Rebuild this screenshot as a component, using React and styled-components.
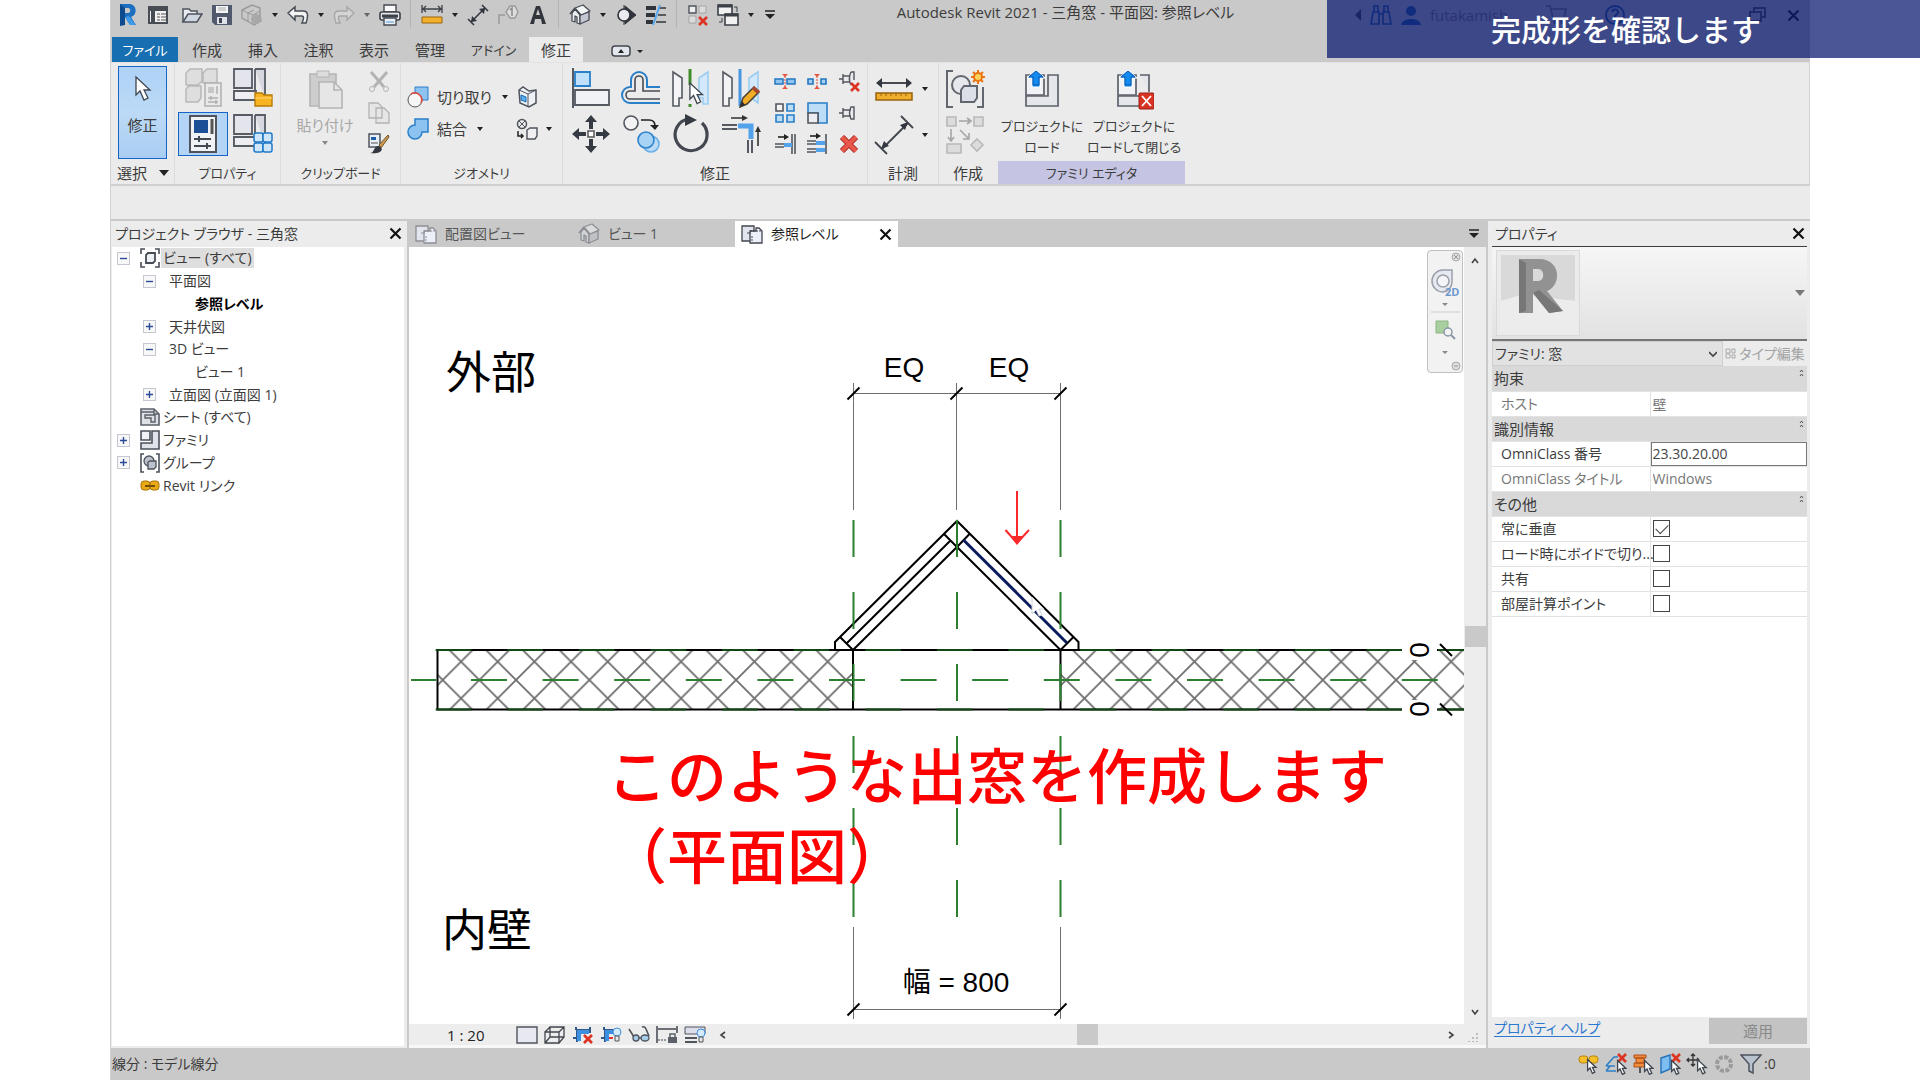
import React, { useState } from 'react'
import styled, { createGlobalStyle } from 'styled-components'

const GlobalStyle = createGlobalStyle`
    * {
        box-sizing: border-box;
    }
    body {
        margin: 0;
        background: #fff;
        color: #3c3c3c;
        font-family: 'Open Sans', 'Noto Sans CJK JP', sans-serif;
        font-size: 14px;
        line-height: 20px;
        font-feature-settings: 'palt';
        overflow: hidden;
    }
    button, input, select {
        font: inherit;
        font-feature-settings: inherit;
        color: inherit;
    }
    svg {
        display: block;
        flex: none;
    }
`

const Page = styled.div`
    height: 100vh;
    padding: 0 110px;
`

const Window = styled.div`
    height: 100%;
    display: grid;
    grid-template-rows: 37px 25px 124px 35px 1fr 32px;
    background: #c9c9c9;
    border-left: 1px solid #d0d0d0;
`

const Plain = styled.button`
    display: flex;
    align-items: center;
    justify-content: center;
    padding: 0;
    border: none;
    background: transparent;
`

/* title bar */

const TitleBar = styled.header`
    display: flex;
    height: 30px;
    padding-left: 2px;
`

const Tool = styled(Plain)`
    width: ${p => p.$w || 30}px;
    height: 30px;
`

const Gap = styled.span`
    width: 4px;
`

const Separator = styled.span`
    width: 1px;
    height: 28px;
    margin: 0 6px 0 5px;
    background: #b4b4b4;
`

const Title = styled.h1`
    flex: 1;
    margin: 0;
    font-size: 15px;
    font-weight: 400;
    line-height: 24px;
    text-align: center;
`

const UserArea = styled.div`
    display: flex;
    align-items: center;
    width: 460px;
    padding: 0 10px 0 4px;
    gap: 8px;
    color: #777;
    font-size: 15px;
`

const Spacer = styled.span`
    flex: 1;
`

/* tabs */

const TabBar = styled.nav`
    display: flex;
    padding-left: 1px;
`

const Tab = styled(Plain)`
    width: ${p => p.$w}px;
    font-size: ${p => (p.$kana ? 13 : 15)}px;
    background: ${p => (p.$active ? '#ebebeb' : 'transparent')};

    &.file {
        background: #176fb1;
        color: #fff;
        margin-right: 1px;
    }
`

/* ribbon */

const Ribbon = styled.div`
    display: flex;
    background: #ebebeb;
    border-top: 1px solid #e3e3e3;
    border-bottom: 2px solid #d0d0d0;
    border-right: 1px solid #d0d0d0;
    padding-left: 1px;
`

const Group = styled.section`
    display: flex;
    flex-direction: column;
    width: ${p => p.$w}px;
    border-right: 1px solid ${p => (p.$last ? 'transparent' : '#dcdcdc')};
`

const GroupBody = styled.div`
    display: flex;
    flex: 1;
    gap: ${p => (p.$tight ? 3 : 0)}px;
    padding: 3px 3px 1px ${p => (p.$tight ? 3 : 6)}px;
`

const GroupLabel = styled.h2`
    display: flex;
    align-items: center;
    justify-content: center;
    gap: 12px;
    height: 23px;
    margin: 0;
    font-size: ${p => (p.$kana ? 13 : 15)}px;
    font-weight: 400;
    background: ${p => (p.$accent ? '#c5c4e2' : 'transparent')};
`

const ModifyButton = styled(Plain)`
    flex-direction: column;
    justify-content: flex-start;
    width: 49px;
    height: 93px;
    gap: 12px;
    padding-top: 8px;
    font-size: 15px;
    border: 1px solid #1564c8;
    background: linear-gradient(#aed2f6, #bcdaf6 50%, #a9cdf2);
`

const BigGrid = styled.div`
    display: grid;
    grid-template-columns: repeat(${p => p.$cols}, 50px);
    grid-template-rows: 46px 46px;
`

const BigButton = styled(Plain)`
    height: 44px;

    &.selected {
        border: 1px solid #1564c8;
        background: #b3d4f5;
    }
`

const SmallGrid = styled.div`
    display: grid;
    grid-template-columns: repeat(${p => p.$cols}, 32px);
    grid-template-rows: repeat(3, 31px);
`

const PasteButton = styled(Plain)`
    flex-direction: column;
    justify-content: flex-start;
    width: 76px;
    padding-top: 4px;
    color: #a8a8a8;
    font-size: 15px;
    gap: 5px;
`

const TextTools = styled.div`
    display: flex;
    flex-direction: column;
    justify-content: center;
    gap: 10px;
    width: ${p => p.$w}px;
`

const TextTool = styled(Plain)`
    justify-content: flex-start;
    gap: ${p => p.$gap || 8}px;
    font-size: 15px;
`

const LoadButton = styled(Plain)`
    flex-direction: column;
    justify-content: flex-start;
    width: ${p => p.$w}px;
    gap: 6px;
    padding-top: 4px;
    font-size: 13px;
    line-height: 21px;
    white-space: nowrap;
`

const Row = styled.div`
    display: flex;
    align-items: center;
    gap: 6px;
    height: 46px;
`

const OptionsBar = styled.div`
    background: #ebebeb;
    border-bottom: 2px solid #c9c9c9;
`

/* workspace */

const Workspace = styled.main`
    display: grid;
    grid-template-columns: 296px 1fr 322px;
    min-height: 0;
    background: #ececec;
`

const Panel = styled.aside`
    display: flex;
    flex-direction: column;
    min-width: 0;
    padding: 0 3px 2px ${p => p.$left || 1}px;
`

const PanelHead = styled.div`
    display: flex;
    align-items: center;
    justify-content: space-between;
    height: 26px;
    padding: 0 2px 0 3px;
    border-bottom: 1px solid ${p => (p.$line ? '#3c3c3c' : 'transparent')};
`

const Tree = styled.ul`
    display: grid;
    grid-auto-rows: 1fr;
    height: 250px;
    margin: 0;
    padding: 0;
    list-style: none;
`

const TreeArea = styled.div`
    flex: 1;
    background: #fff;
`

const TreeRow = styled.li`
    display: flex;
    align-items: center;
    padding-left: ${p => 5 + p.$level * 26}px;
    font-weight: ${p => (p.$bold ? 700 : 400)};
    color: ${p => (p.$bold ? '#000' : '#3c3c3c')};

    svg {
        margin-right: 1px;
    }
`

const TreeText = styled.span`
    padding: 0 2px;
    background: ${p => (p.$selected ? '#dedede' : 'transparent')};
`

const Toggle = styled(Plain)`
    width: 13px;
    height: 13px;
    margin-right: ${p => (p.$level ? 11 : 10)}px;
    border: 1px solid ${p => (p.$empty ? 'transparent' : '#c3c7cf')};
    background: ${p => (p.$empty ? 'transparent' : '#f8f8f8')};

    svg {
        margin: 0;
    }
`

const Center = styled.section`
    display: flex;
    flex-direction: column;
    min-width: 0;
    border-left: 2px solid #c9c9c9;
    border-right: 2px solid #c9c9c9;
`

const ViewTabs = styled.div`
    display: flex;
    height: 26px;
    background: #c9c9c9;
`

const ViewTab = styled(Plain)`
    justify-content: flex-start;
    width: 163px;
    padding: 0 6px;
    gap: 8px;
    color: ${p => (p.$active ? '#1e1e1e' : '#555')};
    background: ${p => (p.$active ? '#fff' : 'transparent')};

    span {
        flex: 1;
        text-align: left;
    }
`

const ViewMenu = styled(Plain)`
    width: 24px;
    margin-left: auto;
`

const ViewArea = styled.div`
    display: grid;
    grid-template-columns: 1fr 22px;
    flex: 1;
    min-height: 0;
    background: #fff;
`

const Canvas = styled.div`
    position: relative;
    min-width: 0;
    min-height: 0;
    overflow: hidden;
    background: #fff;
`

const Drawing = styled.svg`
    position: absolute;
    width: 100%;
    height: 100%;
    font-family: 'Liberation Sans', 'Noto Sans CJK JP', sans-serif;
`

const Caption = styled.p`
    position: absolute;
    left: 198px;
    top: 486px;
    margin: 0;
    color: #fe0000;
    font-family: 'Noto Sans CJK JP', sans-serif;
    font-size: 60px;
    font-weight: 500;
    line-height: 80px;
    white-space: nowrap;
    font-feature-settings: normal;
`

const NavBar = styled.div`
    position: absolute;
    top: 3px;
    right: 1px;
    width: 36px;
    height: 123px;
    background: #f2f2f2;
    border: 1px solid #c0c0c0;
    border-radius: 4px;
`

const VScroll = styled.div`
    display: flex;
    flex-direction: column;
    justify-content: space-between;
    align-items: center;
    padding: 10px 0 8px;
    background: #ededed;
`

const Thumb = styled.span`
    width: 21px;
    height: 21px;
    background: #c9c9c9;
`

const ViewBar = styled.div`
    display: flex;
    align-items: center;
    height: 24px;
    padding: 0 5px 0 38px;
    background: #ededed;
    border-bottom: 3px solid #f8f8f8;
    color: #222;
    font-size: 15px;

    button {
        width: 28px;
    }
`

const Scale = styled.span`
    width: 66px;
`

const Track = styled.div`
    display: flex;
    justify-content: center;
    flex: 1;
`

/* properties */

const TypeSelector = styled.button`
    display: flex;
    align-items: center;
    justify-content: space-between;
    height: 94px;
    padding: 0 2px 0 4px;
    border: none;
    border-bottom: 2px solid #777;
    background: linear-gradient(#f6f6f6, #e2e2e2);
`

const Preview = styled.span`
    display: block;
    padding: 4px;
    border: 1px solid #dadada;
    background: #ebebeb;
`

const FamilyRow = styled.div`
    display: flex;
    height: 25px;
`

const FamilySelect = styled.select`
    width: 231px;
    height: 25px;
    padding: 0 2px;
    border: 1px solid #cfcfcf;
    border-radius: 0;
    background: #e2e2e2;
    appearance: none;
`

const SelectWrap = styled.label`
    position: relative;

    svg {
        position: absolute;
        right: 6px;
        top: 9px;
    }
`

const EditType = styled(Plain)`
    flex: 1;
    gap: 3px;
    color: #a3a3a3;
    white-space: nowrap;
`

const TableArea = styled.div`
    flex: 1;
    background: #fff;
`

const Table = styled.table`
    width: 100%;
    border-collapse: collapse;
    table-layout: fixed;

    th, td {
        height: 25px;
        padding: 0;
        font-weight: 400;
        text-align: left;
        border-bottom: 1px solid #e2e2e2;
    }
`

const GroupCell = styled.th`
    background: #d9d9d9;

    div {
        display: flex;
        justify-content: space-between;
        padding: 0 3px 0 2px;
        font-size: 15px;
    }
`

const NameCell = styled.th`
    color: ${p => (p.$dim ? '#777' : '#3c3c3c')};
    border-right: 1px solid #e2e2e2;

    label {
        display: block;
        padding-left: 9px;
        white-space: nowrap;
    }
`

const ValueInput = styled.input`
    display: block;
    width: 100%;
    height: 24px;
    padding: 0 1px;
    color: ${p => (p.readOnly ? '#777' : '#444')};
    border: 1px solid ${p => (p.readOnly ? 'transparent' : '#777')};
    background: #fff;
`

const Check = styled.input`
    display: block;
    width: 17px;
    height: 17px;
    margin: 0 0 0 2px;
    border: 1px solid #444;
    background: #fff;
    appearance: none;

    &:checked::after {
        content: '';
        display: block;
        width: 11px;
        height: 6px;
        margin: 3px 0 0 2px;
        border-left: 1px solid #444;
        border-bottom: 1px solid #444;
        transform: rotate(-45deg);
    }
`

const PanelFoot = styled.div`
    display: flex;
    justify-content: space-between;
    height: 29px;
    padding: 1px 0 2px 2px;

    a {
        height: 19px;
        color: #2a78cf;
        text-underline-offset: 3px;
    }
    button {
        width: 98px;
        border: none;
        background: #c3c3c3;
        color: #8a8a8a;
        font-size: 15px;
    }
`

const StatusBar = styled.footer`
    display: flex;
    align-items: center;
    padding: 0 34px 0 1px;

    button {
        width: 27px;
    }
    output {
        width: 12px;
    }
`

const Banner = styled.div`
    position: absolute;
    top: 0;
    right: 0;
    width: 593px;
    height: 58px;
    padding-left: 164px;
    background: rgba(12, 27, 113, 0.74);
    color: #fff;
    font-family: 'Noto Sans CJK JP', sans-serif;
    font-size: 30px;
    font-weight: 500;
    line-height: 56px;
    font-feature-settings: normal;
`

/* icons */

const Icon = ({ s = 22, w, h, children }) => (
    <svg width={w || s} height={h || s} viewBox={`0 0 ${w || s} ${h || s}`} fill='none' aria-hidden='true'>
        {children}
    </svg>
)

const Caret = ({ color = '#222', big }) => (
    <Icon w={10} h={6}><path d={big ? 'M0 0h10L5 6z' : 'M2 1h6L5 5z'} fill={color} /></Icon>
)

const Close = () => (
    <Icon s={13}><path d='M1.500 1.500l10 10M11.500 1.500l-10 10' stroke='#111' strokeWidth='2.200' /></Icon>
)

const Chevron = ({ d, color = '#444' }) => (
    <Icon s={8}><path d={d} stroke={color} strokeWidth='1.600' /></Icon>
)

const Pointer = ({ x = 0, y = 0, k = 1 }) => (
    <path transform={`translate(${x} ${y}) scale(${k})`} d='M1 1v18l4-4 4 9 4-2-4-8h6z' fill='#fff' stroke='#3f4650' strokeWidth={1.3 / k} />
)

const RedX = ({ x, y, r = 4 }) => (
    <path d={`M${x - r} ${y - r}l${2 * r} ${2 * r}M${x + r} ${y - r}l${-2 * r} ${2 * r}`} stroke='#dc3323' strokeWidth='2.600' />
)

const House = ({ dim }) => {
    const line = dim ? '#8c8f94' : '#474c55'
    return (
        <Icon>
            <path d='M3 9l3-4 5 6v9l-3-1v-6l-2-1v6l-3-1z' fill={dim ? '#d2d3d6' : '#eceef2'} stroke={line} strokeWidth='1.300' strokeLinejoin='round' />
            <path d='M11 11l9-3v8l-9 4z' fill={dim ? '#bfc1c5' : '#c3c8d2'} stroke={line} strokeWidth='1.300' strokeLinejoin='round' />
            <path d='M6 4l8-3 7 6-9 4z' fill={dim ? '#dadbdd' : '#f3f4f6'} stroke={line} strokeWidth='1.300' strokeLinejoin='round' />
            <path d='M6 4L1 10' stroke={line} strokeWidth='1.600' />
        </Icon>
    )
}

const PlanIcon = ({ dim }) => (
    <Icon w={22} h={20}>
        <path d='M1 2h12v15H1z' fill='#e2e4ee' stroke={dim ? '#8f8f95' : '#42464f'} strokeWidth='1.300' />
        <path d='M9 7h6V4h3l3 3v12H9z' fill='#eef0f8' stroke={dim ? '#8f8f95' : '#42464f'} strokeWidth='1.300' />
        <path d='M9 10v-3h12M11 17v-5M6 9h3' stroke={dim ? '#8f8f95' : '#42464f'} strokeDasharray='2 1' />
    </Icon>
)

const Rlogo = () => (
    <Icon w={20} h={24}>
        <path fillRule='evenodd' d='M2 1h9c8 0 9 11 2 13l5 8h-6l-5-8v8H2zM7 5v5h3c3 0 3-5 0-5z' fill='#1c6fc0' />
        <path d='M2 1l5 4v17l-5 1z' fill='#0d4b8e' />
        <path d='M7 14l4-1 7 9h-6z' fill='#3d9ae8' />
    </Icon>
)

const qat = [
    <Rlogo />,
    <Icon><path d='M2 3h18v16H2z' fill='#f2f2f2' stroke='#474c55' strokeWidth='2' /><path d='M2 3h18v4H2zM4 7v12h4V7z' fill='#474c55' /><path d='M10 10h3M10 13h3M10 16h3M14 10h5M14 13h5M14 16h5' stroke='#555' /></Icon>,
    'gap',
    <Icon><path d='M2 18V5h6l2 2h6v4' fill='#e9ebf0' stroke='#4e535c' strokeWidth='1.500' /><path d='M2 18l5-8h14l-5 8z' fill='#cfd6e2' stroke='#4e535c' strokeWidth='1.500' /></Icon>,
    <Icon><path d='M1 1h20v20H4l-3-3z' fill='#505a6c' /><path d='M5 2h12v7H5z' fill='#f4f5f7' /><path d='M6 13h10v7H6z' fill='#dfe2e8' /><path d='M8 14h3v5H8z' fill='#3d4656' /><path d='M7 4h8M7 6h8' stroke='#aaa' /></Icon>,
    <Icon><path d='M1 6l6-3 4-2 8 3v7l1 6-7 4-5-3-7-4z' fill='#c9c9c9' stroke='#9a9a9a' strokeWidth='1.400' /><path d='M1 6l6 3 6-3M7 9v9M7 9l5 2 7-4M12 11v9' stroke='#9a9a9a' /><circle cx='15' cy='15' r='5' fill='#a8a8a8' /></Icon>,
    'caret',
    <Icon><path d='M1 9l7-6v4h8c6 0 5 6 3 12h-4c2-4 2-7 0-7H8v4z' fill='#f3f3f3' stroke='#474c55' strokeWidth='1.500' /></Icon>,
    'caret',
    <Icon><path d='M21 9l-7-6v4H6C0 7 1 13 3 19h4c-2-4-2-7 0-7h7v4z' fill='#d4d4d4' stroke='#a6a6a6' strokeWidth='1.400' /></Icon>,
    'caret2',
    <Icon><path d='M5 1h12v7H5z' fill='#fafafa' stroke='#454a52' strokeWidth='1.400' /><rect x='1' y='8' width='20' height='8' rx='2' fill='#e6e8ec' stroke='#3c4048' strokeWidth='1.600' /><path d='M3 12h16' stroke='#3c4048' strokeWidth='3' /><path d='M5 14h12v7H5z' fill='#e9eff5' stroke='#454a52' strokeWidth='1.400' /><path d='M7 18h8' stroke='#5a9ad8' /></Icon>,
    'sep',
    <Icon><path d='M1 5h20M1 1v8M21 1v8M5 2L2 5l3 3M17 2l3 3-3 3' stroke='#3c4048' strokeWidth='1.300' /><path d='M1 13h20v6H1z' fill='#f2b02d' stroke='#99640d' /></Icon>,
    'caret',
    <Icon><path d='M4 18L18 4M1 15l6 6M15 1l6 6' stroke='#30353d' strokeWidth='1.500' /><path d='M4 18l1-6 5 5zM18 4l-6 1 5 5z' fill='#30353d' /></Icon>,
    <Icon><path d='M2 20v-9h6' stroke='#9b9b9b' strokeWidth='1.500' /><path d='M9 8l4-6h5l3 6-3 6h-5z' fill='#ddd' stroke='#9b9b9b' strokeWidth='1.400' /><path d='M13 6l2-2v8' stroke='#8b8b8b' strokeWidth='1.500' /></Icon>,
    <Icon><path d='M3 20L9 2h4l6 18h-4l-1-5H8l-1 5zM9 11h4l-2-6z' fill='#30343b' fillRule='evenodd' /></Icon>,
    'sep',
    <House />,
    'caret',
    <Icon><path d='M9 1v20M10 2l11 9-11 9z' fill='#30343b' stroke='#30343b' /><circle cx='9' cy='11' r='6' fill='#e9ebef' stroke='#30343b' strokeWidth='1.600' /></Icon>,
    <Icon><path d='M1 4h10M1 11h9M1 18h7' stroke='#30343b' strokeWidth='4' /><path d='M14 4h7M13 11h8M11 18h10' stroke='#30343b' strokeWidth='1.500' /><path d='M15 1L8 21' stroke='#58a6ee' strokeWidth='2' /></Icon>,
    'sep',
    <Icon><path d='M2 2h7v7H2z' fill='#eee' stroke='#50555e' strokeWidth='1.400' /><path d='M12 2h7v7h-7zM2 12h7v7H2z' fill='#dcdcdc' stroke='#a5a5a5' /><RedX x={16} y={17} r={4} /></Icon>,
    <Icon><path d='M1 1h14v10H1zM8 10h13v11H8z' fill='#f1f1f1' stroke='#3b4048' strokeWidth='1.600' /><path d='M1 2h14M8 11h13' stroke='#3b4048' strokeWidth='3' /><path d='M17 3h3v5M5 14v4h-3' stroke='#3b4048' /></Icon>,
    'caret',
]

const Panes = ({ children }) => (
    <Icon s={40}>
        <path d='M1 1h18v19H1z' fill='#e3e4ec' stroke='#565b64' strokeWidth='1.800' />
        <path d='M22 1h10v29M22 1v22H1v9h19' fill='#d7d8df' stroke='#565b64' strokeWidth='1.800' />
        <path d='M1 23h22v9H1z' fill='#ededf2' stroke='#565b64' strokeWidth='1.800' />
        {children}
    </Icon>
)

const propertyTools = [
    <Icon s={40}>
        <path d='M3 5l4-4h12v12l-4 4H3zM20 5l4-4h10v14H20zM3 21l3-3h12v12l-3 4H3z' fill='#dedede' stroke='#b8b8b8' strokeWidth='1.500' />
        <path d='M22 15h16v23H22z' fill='#e9e9e9' stroke='#b0b0b0' strokeWidth='1.500' />
        <path d='M25 19h6v6h-6z' fill='#c7c7c7' /><path d='M34 18v8M25 30h10M25 34h10M28 28v4M33 32v4' stroke='#b0b0b0' strokeWidth='1.500' />
    </Icon>,
    <Panes><path d='M22 25h7l2 2h8v11H22z' fill='#f7b320' stroke='#b87b09' strokeWidth='1.400' /><path d='M22 30h17' stroke='#fbd780' /></Panes>,
    <Icon s={40}>
        <path d='M7 2h26v36H7z' fill='#f1f2f6' stroke='#4e535c' strokeWidth='2' />
        <path d='M11 6h14v13H11z' fill='#1c4f96' /><path d='M29 5v15' stroke='#555' strokeWidth='3' />
        <path d='M11 25h17M11 32h17M16 22v6M24 29v6' stroke='#444a54' strokeWidth='2' />
    </Icon>,
    <Panes>
        {[21, 30].map(x => [19, 29].map(y => (
            <rect key={`${x}${y}`} x={x} y={y} width='9' height='9' rx='2' fill='#cfe6fa' stroke='#1f78c8' strokeWidth='1.500' />
        )))}
    </Panes>,
]

const modifyTools = [
    <Icon s={40}><path d='M2 0v40' stroke='#555a62' strokeWidth='2' /><path d='M4 4h15v14H4z' fill='#bfe0fa' stroke='#2a7fc9' strokeWidth='1.800' /><path d='M4 22h34v15H4z' fill='#f1f2f5' stroke='#555a62' strokeWidth='1.800' /></Icon>,
    <Icon s={40}><path d='M39 19H26V12a8 8 0 0 0-16 0v7H9a8 8 0 0 0 0 16h30' stroke='#2a7fc9' strokeWidth='2' /><path d='M39 23H22V12a4 4 0 0 0-8 0v11H9a4 4 0 0 0 0 8h30' stroke='#474c55' strokeWidth='1.600' /></Icon>,
    <Icon s={40}><path d='M2 4l9 6v20H8v8H2z' fill='#f4f4f6' stroke='#555a62' strokeWidth='1.600' /><path d='M37 4l-9 6v20h4v6h5z' fill='#d3e9fb' stroke='#9ccdf1' strokeWidth='1.600' /><path d='M19 1v16M19 36v3' stroke='#418b2b' strokeWidth='3' /><Pointer x={18} y={14} k={0.9} /></Icon>,
    <Icon s={40}><path d='M2 4l9 6v20H8v8H2z' fill='#f4f4f6' stroke='#555a62' strokeWidth='1.600' /><path d='M37 4l-9 6v18l9 7z' fill='#d3e9fb' stroke='#9ccdf1' strokeWidth='1.600' /><path d='M19 1v37' stroke='#4797e0' strokeWidth='3' /><path d='M19 39l3-9 11-11 5 5-12 12z' fill='#f3ac25' stroke='#4a4234' strokeWidth='1.500' /><path d='M19 39l2-6 3 4z' fill='#2c2c2c' /><path d='M31 21l2-3 6 5-3 3z' fill='#a94b31' /></Icon>,
    <Icon s={40}><path d='M20 1l6 7h-4v7h-4V8h-4zM20 39l6-7h-4v-7h-4v7h-4zM1 20l7-6v4h7v4H8v4zM39 20l-7-6v4h-7v4h7v4z' fill='#363b43' /><path d='M17 17h6v6h-6z' fill='#fff' stroke='#555' strokeWidth='1.500' /></Icon>,
    <Icon s={40}><circle cx='10' cy='9' r='7' fill='#f3f3f3' stroke='#50555e' strokeWidth='1.600' /><path d='M20 6h8q6 0 6 6' stroke='#222' strokeWidth='1.600' /><path d='M29 11h9l-4 5z' fill='#222' /><circle cx='30' cy='30' r='8' fill='#bcdcf6' stroke='#6ab0e8' strokeWidth='1.600' /><circle cx='25' cy='26' r='8' fill='#a8d3f4' stroke='#2d82cb' strokeWidth='1.600' /></Icon>,
    <Icon s={40}><path d='M31 9a16 16 0 1 1-14-4' stroke='#43474f' strokeWidth='3.200' /><path d='M14 0l12 6-12 6z' fill='#363b43' /></Icon>,
    <Icon s={40}><path d='M1 11h15M1 15h15M27 26v13M31 26v13' stroke='#555a62' strokeWidth='2' /><path d='M17 12h13v13' stroke='#52a2ec' strokeWidth='5' /><path d='M10 4h15M37 32V16' stroke='#333' strokeWidth='1.600' /><path d='M21 1l6 3-6 3zM34 18l3-6 3 6z' fill='#333' /></Icon>,
]

const splitTools = [
    <Icon><path d='M1 8h8v5H1zM13 8h8v5h-8z' fill='#8fc4f0' stroke='#2276c0' strokeWidth='1.500' /><path d='M11 5v11' stroke='#d34b3c' strokeDasharray='2 1' /><path d='M8 3h6l-3 3zM8 18h6l-3-3z' fill='#e3533f' /></Icon>,
    <Icon><path d='M2 8h5v5H2zM15 8h5v5h-5z' fill='#a6d0f3' stroke='#2276c0' strokeWidth='1.600' /><path d='M11 5v11' stroke='#d34b3c' strokeDasharray='2 1' /><path d='M8 3h6l-3 3zM8 18h6l-3-3z' fill='#e3533f' /></Icon>,
    <Icon><path d='M1 8h4M5 3v10M5 5h7M5 11h7M13 1c-2 4-2 9 0 13M13 1h3v8' stroke='#51565e' strokeWidth='1.400' /><RedX x={17} y={16} /></Icon>,
    <Icon><path d='M2 2h7v7H2z' fill='#f3f3f3' stroke='#50555e' strokeWidth='1.600' /><path d='M13 2h7v7h-7zM2 13h7v7H2zM13 13h7v7h-7z' fill='#bddcf6' stroke='#2a7fc9' strokeWidth='1.600' /></Icon>,
    <Icon><path d='M2 1h19v20H12V11H2z' fill='#bddcf6' stroke='#2a7fc9' strokeWidth='1.600' /><path d='M2 11h10v10H2z' fill='#ededf1' stroke='#50555e' strokeWidth='1.600' /></Icon>,
    <Icon><path d='M1 11h4M5 6v10M5 8h8M5 14h8M13 5c-2 4-2 8 0 12h3V5z' stroke='#51565e' strokeWidth='1.400' /></Icon>,
    <Icon><path d='M1 11h9M1 14h9M18 1v20M21 1v20' stroke='#51565e' strokeWidth='1.600' /><path d='M10 12h8' stroke='#52a2ec' strokeWidth='4' /><path d='M4 4h8' stroke='#222' strokeWidth='1.600' /><path d='M10 1l5 3-5 3z' fill='#222' /></Icon>,
    <Icon><path d='M1 8h9M1 11h9M1 16h9M1 19h9M20 1v20' stroke='#51565e' strokeWidth='1.600' /><path d='M10 10h9M10 17h9' stroke='#52a2ec' strokeWidth='4' /><path d='M4 3h8' stroke='#222' strokeWidth='1.600' /><path d='M10 0l5 3-5 3z' fill='#222' /></Icon>,
    <Icon><path d='M4 4l14 14M18 4L4 18' stroke='#a6271b' strokeWidth='6' /><path d='M4 4l14 14M18 4L4 18' stroke='#e8574a' strokeWidth='4' /></Icon>,
]

const FamilyLoad = ({ closing }) => (
    <Icon s={40}>
        <path d='M4 5h18v20H4z' fill='#f1f2f6' stroke='#5d626b' strokeWidth='1.700' />
        <path d={closing ? 'M26 5h9v17M4 26h22v10H4z' : 'M26 5h10v31H4V26h22z'} fill='#e5e6ec' stroke='#5d626b' strokeWidth='1.700' />
        <path d='M14 0l9 8h-5v9h-8V8H5z' fill='#128af0' stroke='#fff' />
        <path d='M14 1l7 6h-4v8h-6V7H7z' fill='#128af0' stroke='#0a57ad' />
        {closing && <><rect x='25' y='23' width='15' height='16' rx='1' fill='#d93324' stroke='#9c1d12' /><path d='M28 26l9 10M37 26l-9 10' stroke='#fff' strokeWidth='1.800' /></>}
    </Icon>
)

const GroupIcon = () => (
    <Icon s={40}>
        <path d='M8 2H2v36h6M32 38h6V18' stroke='#62666e' strokeWidth='2' />
        <circle cx='16' cy='16' r='9' fill='#e6e8ee' stroke='#62666e' strokeWidth='2' />
        <path d='M16 21l3-4h13v12l-3 4H16z' fill='#dcdfe7' stroke='#62666e' strokeWidth='2' />
        <path d='M33 1v14M26 8h14M28 3l10 10M38 3L28 13' stroke='#ea7413' strokeWidth='2' /><circle cx='33' cy='8' r='4' fill='#fbd25b' stroke='#ea7413' strokeWidth='2' />
    </Icon>
)

const treeIcons = {
    view: <Icon w={20} h={20}><path d='M1 6V1h4M15 1h4v5M19 14v5h-4M5 19H1v-5' stroke='#474c55' strokeWidth='1.600' /><path d='M6 7l2-2h7v8l-2 2H6z' fill='#f0f1f4' stroke='#474c55' strokeWidth='1.800' /></Icon>,
    sheet: <Icon w={20} h={20}><path d='M1 2h13l5 5v11H1z' fill='#dfe1e7' stroke='#5b6069' strokeWidth='1.600' /><path d='M1 5h13M5 8h10v7H11v-4H5zM14 2v5h5' stroke='#5b6069' strokeWidth='1.400' /></Icon>,
    family: <Icon w={20} h={20}><path d='M1 1h9v9H1z' fill='#f0f1f4' stroke='#4c515a' strokeWidth='1.600' /><path d='M12 1h7v18H1v-6h11z' fill='#e1e3ea' stroke='#4c515a' strokeWidth='1.600' /></Icon>,
    group: <Icon w={20} h={20}><path d='M4 1H1v18h3M16 1h3v18h-3' stroke='#4c515a' strokeWidth='1.600' /><circle cx='9' cy='8' r='5' fill='#bcc2cd' stroke='#4c515a' strokeWidth='1.300' /><path d='M8 9l2-1h6v6l-2 2H8z' fill='#bcc2cd' stroke='#4c515a' strokeWidth='1.300' /></Icon>,
    link: <Icon w={20} h={20}><rect x='1' y='5' width='9' height='9' rx='3' fill='#e9aa18' stroke='#a87309' /><rect x='10' y='5' width='9' height='9' rx='3' fill='#e9aa18' stroke='#a87309' /><path d='M5 10h10' stroke='#76500a' strokeWidth='2' /></Icon>,
}

const tree = [
    { level: 0, text: 'ビュー (すべて)', icon: 'view', open: true, selected: true },
    { level: 1, text: '平面図', open: true },
    { level: 2, text: '参照レベル', bold: true },
    { level: 1, text: '天井伏図', open: false },
    { level: 1, text: '3D ビュー', open: true },
    { level: 2, text: 'ビュー 1' },
    { level: 1, text: '立面図 (立面図 1)', open: false },
    { level: 0, text: 'シート (すべて)', icon: 'sheet' },
    { level: 0, text: 'ファミリ', icon: 'family', open: false },
    { level: 0, text: 'グループ', icon: 'group', open: false },
    { level: 0, text: 'Revit リンク', icon: 'link' },
]

const tabs = [
    { name: '作成', w: 56 },
    { name: '挿入', w: 56 },
    { name: '注釈', w: 55 },
    { name: '表示', w: 56 },
    { name: '管理', w: 56 },
    { name: 'アドイン', w: 71, kana: true },
    { name: '修正', w: 54, active: true },
]

const viewTools = [
    <Icon><path d='M1 3h20v16H1z' fill='#e7e8f0' stroke='#50555e' strokeWidth='1.400' /></Icon>,
    <Icon><path d='M1 8h14v11H1zM6 3h14v10H6zM1 8l5-5M15 8l5-5M15 19l5-6M1 19l5-6' stroke='#42464e' strokeWidth='1.300' /></Icon>,
    <Icon><path d='M1 14h5M5 18V6h13M4 3v3M18 3v6' stroke='#30588a' strokeWidth='2' /><path d='M7 17V8h10' stroke='#3d8fe0' strokeWidth='4' /><RedX x={16} y={15} /></Icon>,
    <Icon><path d='M1 14h5M5 18V6h10M4 3v3' stroke='#30588a' strokeWidth='2' /><path d='M7 17V8h8' stroke='#3d8fe0' strokeWidth='4' /><path d='M9 14h4' stroke='#d33' strokeWidth='2' /><circle cx='17' cy='8' r='4' fill='#d5eafb' stroke='#3d8fe0' /><path d='M15 12h4v5h-4z' fill='#e5e8ee' stroke='#555' /></Icon>,
    <Icon><path d='M1 5l5 8M11 14h3M14 3q3-1 4 2l3 7' stroke='#4e535c' strokeWidth='1.600' /><ellipse cx='8' cy='14' rx='3' ry='3' fill='#a8cdeb' stroke='#4e535c' strokeWidth='1.300' /><ellipse cx='17' cy='14' rx='4' ry='3' fill='#a8cdeb' stroke='#4e535c' strokeWidth='1.300' /></Icon>,
    <Icon><path d='M1 2v17M21 2v7M2 5h18' stroke='#42464e' strokeWidth='1.500' /><path d='M2 16h8' stroke='#42464e' strokeDasharray='2 1' /><path d='M12 13h9v6h-9z' fill='#5b6069' /><path d='M14 13v-3h5v3' stroke='#5b6069' strokeWidth='1.500' /></Icon>,
    <Icon><path d='M1 3h20v7H1z' fill='#dbdee8' stroke='#50555e' /><path d='M1 14h12M1 18h12' stroke='#50555e' strokeWidth='1.800' /><circle cx='17' cy='9' r='4' fill='#d5eafb' stroke='#3d8fe0' /><path d='M15 13h4v5h-4z' fill='#e5e8ee' stroke='#555' /></Icon>,
]

const statusTools = [
    <Icon><rect x='1' y='3' width='9' height='7' rx='3' fill='#f3c02c' stroke='#b9850e' /><rect x='11' y='3' width='9' height='7' rx='3' fill='#f3c02c' stroke='#b9850e' /><Pointer x={9} y={6} k={0.6} /></Icon>,
    <Icon><path d='M1 13L9 4h4M1 13h9M1 18h10M1 18l4-5' stroke='#2f7fc6' strokeWidth='1.600' /><RedX x={17} y={5} /><Pointer x={12} y={7} k={0.6} /></Icon>,
    <Icon><path d='M2 2h12v3H2zM4 5h8v5H4zM2 10h12v4H2z' fill='#f08d3c' stroke='#b04f18' /><path d='M8 14v6' stroke='#555' strokeWidth='2' /><Pointer x={12} y={7} k={0.6} /></Icon>,
    <Icon><path d='M2 5l9-3v14l-9 4z' fill='#7dbdf0' stroke='#2472b8' strokeWidth='1.400' /><RedX x={17} y={5} /><Pointer x={12} y={7} k={0.6} /></Icon>,
    <Icon><path d='M7 1v12M1 7h12M5 3l2-2 2 2M5 11l2 2 2-2M3 5L1 7l2 2M11 5l2 2-2 2' stroke='#333' strokeWidth='1.300' /><Pointer x={11} y={6} k={0.62} /></Icon>,
    <Icon><circle cx='11' cy='11' r='7' stroke='#9b9b9b' strokeWidth='4' strokeDasharray='4 1.500' /></Icon>,
    <Icon><path d='M1 2h20l-8 9v9l-4-2v-7z' fill='#b9c3d0' stroke='#4c525c' strokeWidth='1.500' /></Icon>,
]

const Tick = ({ x, y, flip }) => (
    <path d={flip ? `M${x - 6} ${y - 6}l12 12` : `M${x - 6} ${y + 6}l12 -12`} stroke='#000' strokeWidth='2' />
)

const HatchedWall = ({ x, width }) => (
    <rect x={x} y='650' width={width} height='60' fill='url(#hatch)' />
)

const PlanDrawing = () => (
    <Drawing viewBox='409 247 1055 777' preserveAspectRatio='xMidYMid slice'>
        <defs>
            <pattern id='hatch' x='442.700' y='680' width='36.670' height='36.670' patternUnits='userSpaceOnUse'>
                <path d='M-1 -1l39 39M37.670 -1l-39 39' stroke='#6e6e6e' strokeWidth='1.800' />
            </pattern>
        </defs>
        <HatchedWall x={438} width={415} />
        <HatchedWall x={1061} width={403} />
        <path d='M1464 650H437.500V709.500H1464M853 650v60M1060.500 650v60' stroke='#000' strokeWidth='2' fill='none' />
        <path d='M435.700 650H1464M435.700 709.500H1464' stroke='#124715' strokeWidth='2' strokeDasharray='35.600 36' />
        <path d='M411 680h25M471 680H1464' stroke='#2c7f2f' strokeWidth='2' strokeDasharray='36 35.600' />

        <g stroke='#6e6e6e' strokeWidth='1' fill='none'>
            <path d='M853.500 383v127M956.500 383v127M1060.500 383v127M853 393.500h207' />
            <path d='M853.500 927v92M1060.500 927v92M853 1009.500h207' />
        </g>
        <Tick x={853.5} y={393.5} />
        <Tick x={956.5} y={393.5} />
        <Tick x={1060.5} y={393.5} />
        <Tick x={853.5} y={1009.5} />
        <Tick x={1060.5} y={1009.5} />

        <g stroke='#000' strokeWidth='2' fill='none'>
            <path d='M835 650v-8L957 521l121.500 121v8' />
            <path d='M853 650l104-103 103.500 103' />
            <path d='M944 534l13 13 12.500-13M840 637l13 13M1073.500 637l-13 13M950 541L847 643' />
            <path d='M963.500 540L1067 643' stroke='#0b1c5e' strokeWidth='3' />
        </g>
        <path d='M853.500 520v397M957 520v397M1060.500 520v397' stroke='#2c7f2f' strokeWidth='2' strokeDasharray='37 35' />
        <path d='M1032 597v17l4-4 3 6 3-1-3-6h5z' fill='#fff' stroke='#c9ced8' />

        <path d='M1017 491v50M1005.500 530l11.500 13 12-13' stroke='#fb2a2a' strokeWidth='2' fill='none' />
        <path d='M1010 536h14l-7 9z' fill='#fb2a2a' />

        <path d='M1402 640h35v20h-35zM1402 700h35v20h-35z' fill='#fff' />
        <Tick x={1446} y={650} flip />
        <Tick x={1446} y={709.5} flip />

        <g fontSize='28' fill='#000' textAnchor='middle'>
            <text x='904' y='377'>EQ</text>
            <text x='1009' y='377'>EQ</text>
            <text x='956' y='992'>幅 = 800</text>
            <text transform='rotate(-90 1429 650)' x='1429' y='650'>0</text>
            <text transform='rotate(-90 1429 709)' x='1429' y='709'>0</text>
        </g>
        <g fontSize='45' fill='#000' fontFamily='Noto Sans CJK JP, sans-serif'>
            <text x='446' y='389'>外部</text>
            <text x='442' y='947'>内壁</text>
        </g>
    </Drawing>
)

const QuickAccess = () => qat.map((item, i) => {
    if (item === 'gap') return <Gap key={i} />
    if (item === 'sep') return <Separator key={i} />
    if (item === 'caret') return <Tool key={i} $w={16} aria-label='メニュー'><Caret /></Tool>
    if (item === 'caret2') return <Tool key={i} $w={16} aria-label='メニュー'><Caret color='#666' /></Tool>
    return <Tool key={i}>{item}</Tool>
})

const RibbonBar = () => (
    <Ribbon>
        <Group $w={63}>
            <GroupBody>
                <ModifyButton><Icon w={20} h={28}><Pointer x={2} y={1} k={1} /></Icon>修正</ModifyButton>
            </GroupBody>
            <GroupLabel>選択 <Caret big /></GroupLabel>
        </Group>
        <Group $w={106}>
            <GroupBody $tight>
                <BigGrid $cols={2}>
                    {propertyTools.map((icon, i) => <BigButton key={i} className={i === 2 ? 'selected' : ''}>{icon}</BigButton>)}
                </BigGrid>
            </GroupBody>
            <GroupLabel $kana>プロパティ</GroupLabel>
        </Group>
        <Group $w={120}>
            <GroupBody>
                <PasteButton>
                    <Icon s={40}><path d='M5 4h26v32H5z' fill='#cdcdcd' stroke='#b5b5b5' strokeWidth='1.600' /><path d='M12 1h12v6H12z' fill='#ddd' stroke='#b5b5b5' /><path d='M14 12h15l8 8v18H14z' fill='#e6e6e6' stroke='#b5b5b5' strokeWidth='1.600' /><path d='M29 12v8h8' stroke='#b5b5b5' strokeWidth='1.600' /></Icon>
                    貼り付け
                    <Caret color='#888' />
                </PasteButton>
                <SmallGrid $cols={1}>
                    <Plain><Icon><path d='M3 1l13 15M19 1L6 16' stroke='#b3b3b3' strokeWidth='3' /><circle cx='4' cy='18' r='2.500' stroke='#b3b3b3' /><circle cx='18' cy='18' r='2.500' stroke='#b3b3b3' /></Icon></Plain>
                    <Plain><Icon><path d='M1 1h9l4 4v11H1zM8 6h8l5 5v10H8z' fill='#e6e6e6' stroke='#b3b3b3' strokeWidth='1.300' /></Icon></Plain>
                    <Plain><Icon><path d='M1 1h11v13H1z' fill='#e8eef5' stroke='#50555e' strokeWidth='1.500' /><path d='M3 4h5v3H3z' fill='#1c5fa8' /><path d='M3 10h7' stroke='#555' /><path d='M20 2l-9 10 2 3 8-11z' fill='#cf9a50' stroke='#6b5229' /><path d='M2 20c5 0 3-7 9-7l3 3c-1 4-6 5-12 4z' fill='#333840' /></Icon></Plain>
                </SmallGrid>
            </GroupBody>
            <GroupLabel $kana>クリップボード</GroupLabel>
        </Group>
        <Group $w={162}>
            <GroupBody>
                <TextTools $w={109}>
                    <TextTool><Icon><path d='M8 1h13v13H8z' fill='#8cc3f0' stroke='#2a7fc9' /><circle cx='8' cy='14' r='7' fill='#f6f6f6' stroke='#555' /><path d='M4 8a7 7 0 0 1 10 9' stroke='#e04b43' strokeWidth='1.600' /></Icon>切り取り<Caret /></TextTool>
                    <TextTool><Icon><path d='M8 1h13v13h-6a7 7 0 1 1-7-7z' fill='#8cc3f0' stroke='#2a7fc9' strokeWidth='1.500' /></Icon>結合<Caret /></TextTool>
                </TextTools>
                <TextTools $w={40}>
                    <TextTool><Icon><path d='M3 4l4-3 6 4 7-1v13l-7 4-9-4z' fill='#eef1f5' stroke='#4e535c' strokeWidth='1.500' /><path d='M3 4l9 4v12M12 8l8-4' stroke='#4e535c' /><path d='M5 9l5 2v5l-5-2z' fill='#5aaef0' stroke='#1b6bb2' /></Icon></TextTool>
                    <TextTool $gap={6}><Icon><circle cx='6' cy='6' r='4.500' stroke='#4e535c' strokeWidth='1.500' /><path d='M3 3l6 6M9 3L3 9' stroke='#4e535c' /><path d='M2 13v5h5M5 16l2 2-2 2' stroke='#222' strokeWidth='1.500' /><path d='M11 12l3-2h7v8l-2 3h-8z' fill='#f0f0f3' stroke='#4e535c' strokeWidth='1.400' /></Icon><Caret /></TextTool>
                </TextTools>
            </GroupBody>
            <GroupLabel $kana>ジオメトリ</GroupLabel>
        </Group>
        <Group $w={305}>
            <GroupBody $tight>
                <BigGrid $cols={4}>{modifyTools.map((icon, i) => <BigButton key={i}>{icon}</BigButton>)}</BigGrid>
                <SmallGrid $cols={3}>{splitTools.map((icon, i) => <Plain key={i}>{icon}</Plain>)}</SmallGrid>
            </GroupBody>
            <GroupLabel>修正</GroupLabel>
        </Group>
        <Group $w={71}>
            <GroupBody>
                <div>
                    <Row><Icon s={40}><path d='M4 14h32' stroke='#333840' strokeWidth='1.800' /><path d='M2 14l6-5v10zM38 14l-6-5v10z' fill='#333840' /><path d='M2 24h36v7H2z' fill='#efaf2d' stroke='#96620d' strokeWidth='1.500' /><path d='M7 24v3M12 24v3M17 24v3M22 24v3M27 24v3M32 24v3' stroke='#96620d' /></Icon><Caret /></Row>
                    <Row><Icon s={40}><path d='M8 34L34 8M1 27l12 12M27 1l12 12' stroke='#41464e' strokeWidth='1.800' /><path d='M7 34l3-8 5 5zM34 7l-8 3 5 5z' fill='#333840' /></Icon><Caret /></Row>
                </div>
            </GroupBody>
            <GroupLabel>計測</GroupLabel>
        </Group>
        <Group $w={59} $last>
            <GroupBody>
                <div>
                    <Row><GroupIcon /></Row>
                    <Row><Icon s={40}><path d='M2 2h9v9H2zM29 2h9v9h-9zM2 29h14v9H2zM32 24l6 6-6 6-6-6z' fill='#dcdcdc' stroke='#b9b9b9' strokeWidth='1.600' /><path d='M14 6h11M6 14v11M15 15l8 8M22 3l4 3-4 3M3 22l3 4 3-4M24 18v6h-6' stroke='#a5a5a5' strokeWidth='1.600' /></Icon></Row>
                </div>
            </GroupBody>
            <GroupLabel>作成</GroupLabel>
        </Group>
        <Group $w={188} $last>
            <GroupBody $tight>
                <LoadButton $w={82}><FamilyLoad /><span>プロジェクトに<br />ロード</span></LoadButton>
                <LoadButton $w={98}><FamilyLoad closing /><span>プロジェクトに<br />ロードして閉じる</span></LoadButton>
            </GroupBody>
            <GroupLabel $accent $kana>ファミリ エディタ</GroupLabel>
        </Group>
    </Ribbon>
)

const ProjectBrowser = () => (
    <Panel>
        <PanelHead>プロジェクト ブラウザ - 三角窓<Plain aria-label='閉じる'><Close /></Plain></PanelHead>
        <TreeArea>
            <Tree>
                {tree.map(n => (
                    <TreeRow key={n.text} $level={n.level} $bold={n.bold}>
                        <Toggle $level={n.level} $empty={n.open === undefined}>
                            {n.open !== undefined && <Icon s={7}><path d={n.open ? 'M0 3.500h7' : 'M0 3.500h7M3.500 0v7'} stroke='#2a4a9a' strokeWidth='1.400' /></Icon>}
                        </Toggle>
                        {n.icon && treeIcons[n.icon]}
                        <TreeText $selected={n.selected}>{n.text}</TreeText>
                    </TreeRow>
                ))}
            </Tree>
        </TreeArea>
    </Panel>
)

const ViewWindow = () => (
    <Center>
        <ViewTabs>
            <ViewTab><PlanIcon dim /><span>配置図ビュー</span></ViewTab>
            <ViewTab><House dim /><span>ビュー 1</span></ViewTab>
            <ViewTab $active><PlanIcon /><span>参照レベル</span><Close /></ViewTab>
            <ViewMenu aria-label='ビュー一覧'><Icon w={10} h={10}><path d='M0 1h10' stroke='#222' strokeWidth='1.500' /><path d='M0 4h10L5 9z' fill='#222' /></Icon></ViewMenu>
        </ViewTabs>
        <ViewArea>
            <Canvas>
                <PlanDrawing />
                <Caption>このような出窓を作成します<br />（平面図）</Caption>
                <NavBar>
                    <Icon w={34} h={121}>
                        <circle cx='28' cy='6' r='4' fill='#ddd' stroke='#aaa' /><path d='M26 4l4 4M30 4l-4 4' stroke='#999' />
                        <path d='M4 30a11 11 0 0 1 11-11h9v12a10 10 0 0 1-9 10A11 11 0 0 1 4 30z' fill='#e7e9f0' stroke='#9ba0aa' strokeWidth='1.500' />
                        <circle cx='15' cy='30' r='6' fill='#f5f5f8' stroke='#9ba0aa' strokeWidth='1.500' />
                        <text x='17' y='45' fontSize='11' fontWeight='700' fill='#6d98cc'>2D</text>
                        <path d='M14 52h6l-3 3zM14 100h6l-3 3z' fill='#888' /><path d='M3 61h29' stroke='#ccc' />
                        <path d='M8 70h12v12H8z' fill='#a9cfa0' stroke='#8bb583' /><circle cx='20' cy='81' r='4' fill='#f3f3f3' stroke='#8a97a8' strokeWidth='1.500' /><path d='M23 84l4 4' stroke='#8a97a8' strokeWidth='2' />
                        <circle cx='28' cy='115' r='4' fill='#ddd' stroke='#aaa' /><path d='M26 115h4' stroke='#999' />
                    </Icon>
                </NavBar>
            </Canvas>
            <VScroll>
                <Chevron d='M1 6l3-4 3 4' />
                <Thumb />
                <Chevron d='M1 2l3 4 3-4' />
            </VScroll>
        </ViewArea>
        <ViewBar>
            <Scale>1 : 20</Scale>
            {viewTools.map((icon, i) => <Plain key={i}>{icon}</Plain>)}
            <Plain><Chevron d='M6 1L2 4l4 3' /></Plain>
            <Track><Thumb /></Track>
            <Plain><Chevron d='M2 1l4 3-4 3' /></Plain>
            <Icon w={16} h={16}><path d='M12 6v9M8 10v5M4 14v1' stroke='#bbb' strokeWidth='2' strokeDasharray='2 2' /></Icon>
        </ViewBar>
    </Center>
)

const Section = ({ title }) => (
    <tr><GroupCell colSpan={2}><div>{title}<Icon w={5} h={10}><path d='M1 4l1.500-2L4 4M1 8l1.500-2L4 8' stroke='#555' /></Icon></div></GroupCell></tr>
)

const Field = ({ id, label, value, readOnly }) => {
    const [text, setText] = useState(value)
    return (
        <tr>
            <NameCell $dim={readOnly}><label htmlFor={id}>{label}</label></NameCell>
            <td><ValueInput id={id} value={text} readOnly={readOnly} onChange={e => setText(e.target.value)} /></td>
        </tr>
    )
}

const CheckField = ({ id, label, checked }) => (
    <tr>
        <NameCell><label htmlFor={id}>{label}</label></NameCell>
        <td><Check id={id} type='checkbox' defaultChecked={checked} /></td>
    </tr>
)

const Properties = () => (
    <Panel $left={4}>
        <PanelHead $line>プロパティ<Plain aria-label='閉じる'><Close /></Plain></PanelHead>
        <TypeSelector aria-label='タイプ セレクタ'>
            <Preview>
                <Icon w={74} h={76}>
                    <path d='M0 0h74v46L20 40 0 46z' fill='#d9d9d9' /><path d='M0 46l20-6 54 6v30H0z' fill='#ececec' />
                    <path fillRule='evenodd' d='M18 4h20c22 0 23 26 8 32l16 20-14 2-16-20v20H18zM32 14v12h5c7 0 7-12 0-12z' fill='#929292' />
                    <path d='M18 4l7 4v48l-7 2zM32 38l6-3 24 21-14 2z' fill='#777' />
                </Icon>
            </Preview>
            <Caret color='#777' big />
        </TypeSelector>
        <FamilyRow>
            <SelectWrap>
                <FamilySelect aria-label='ファミリ'><option>ファミリ: 窓</option></FamilySelect>
                <Chevron d='M0 2l4 4 4-4' />
            </SelectWrap>
            <EditType><Icon w={11} h={11}><path d='M1 1h4v4H1zM1 6h4v4H1zM7 1h3v4H7zM7 7h3v3H7z' stroke='#aaa' /></Icon>タイプ編集</EditType>
        </FamilyRow>
        <TableArea>
            <Table>
                <colgroup><col width='158' /><col /></colgroup>
                <tbody>
                    <Section title='拘束' />
                    <Field id='host' label='ホスト' value='壁' readOnly />
                    <Section title='識別情報' />
                    <Field id='omni-number' label='OmniClass 番号' value='23.30.20.00' />
                    <Field id='omni-title' label='OmniClass タイトル' value='Windows' readOnly />
                    <Section title='その他' />
                    <CheckField id='vertical' label='常に垂直' checked />
                    <CheckField id='void' label='ロード時にボイドで切り...' />
                    <CheckField id='shared' label='共有' />
                    <CheckField id='room' label='部屋計算ポイント' />
                </tbody>
            </Table>
        </TableArea>
        <PanelFoot>
            <a href='#help'>プロパティ ヘルプ</a>
            <button disabled>適用</button>
        </PanelFoot>
    </Panel>
)

export default function App() {
    return (
        <Page>
            <GlobalStyle />
            <Window>
                <TitleBar>
                    <QuickAccess />
                    <Tool $w={22} aria-label='カスタマイズ'><Icon w={10} h={10}><path d='M0 1h10' stroke='#222' strokeWidth='1.500' /><path d='M0 4h10L5 9z' fill='#222' /></Icon></Tool>
                    <Title>Autodesk Revit 2021 - 三角窓 - 平面図: 参照レベル</Title>
                    <UserArea>
                        <Icon w={8} h={12}><path d='M7 0v12L1 6z' fill='#444' /></Icon>
                        <Icon><path d='M3 8h6v12H1zM13 8h6l2 12h-8zM4 2h4v6H4zM14 2h4v6h-4zM9 10h4' stroke='#1e5a96' strokeWidth='1.600' /></Icon>
                        <Icon><circle cx='11' cy='7' r='5' fill='#1f5fa5' /><path d='M1 21c1-8 19-8 20 0z' fill='#1f5fa5' /></Icon>
                        futakamish
                        <Spacer />
                        <Icon><path d='M1 2h4l3 12h11l2-9H6' stroke='#777' strokeWidth='1.600' /><circle cx='10' cy='18' r='2' fill='#777' /><circle cx='17' cy='18' r='2' fill='#777' /></Icon>
                        <Spacer />
                        <Icon><circle cx='11' cy='11' r='9' stroke='#1e5a96' strokeWidth='2' /><path d='M8 8c1-4 7-3 6 1l-3 3v2M11 16v2' stroke='#1e5a96' strokeWidth='2' /></Icon>
                        <Spacer /><Spacer /><Spacer /><Spacer />
                        <Icon s={18}><path d='M1 6h11v9H1zM5 6V2h11v9h-4' stroke='#555' strokeWidth='2' /></Icon>
                        <Gap />
                        <Close />
                    </UserArea>
                </TitleBar>
                <TabBar>
                    <Tab className='file' $w={66} $kana>ファイル</Tab>
                    {tabs.map(t => <Tab key={t.name} $w={t.w} $kana={t.kana} $active={t.active}>{t.name}</Tab>)}
                    <Tool $w={90} aria-label='リボン表示'>
                        <Icon w={34} h={14}><rect x='1' y='1' width='18' height='10' rx='3' fill='#e3e6ec' stroke='#42464e' strokeWidth='1.500' /><path d='M7 8l3-4 3 4zM26 5h6l-3 3z' fill='#222' /></Icon>
                    </Tool>
                </TabBar>
                <RibbonBar />
                <OptionsBar />
                <Workspace>
                    <ProjectBrowser />
                    <ViewWindow />
                    <Properties />
                </Workspace>
                <StatusBar>
                    線分 : モデル線分
                    <Spacer />
                    {statusTools.map((icon, i) => <Plain key={i}>{icon}</Plain>)}
                    <output>:0</output>
                </StatusBar>
            </Window>
            <Banner>完成形を確認します</Banner>
        </Page>
    )
}
